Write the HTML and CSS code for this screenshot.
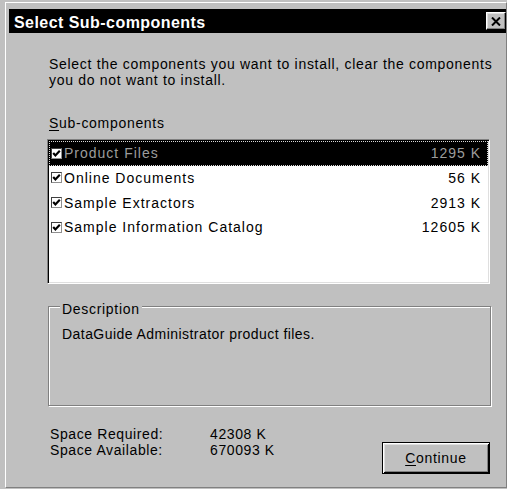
FILE: index.html
```html
<!DOCTYPE html>
<html lang="en">
<head>
<meta charset="utf-8">
<title>Select Sub-components</title>
<link rel="stylesheet" href="styles.css">
</head>
<body>
<div class="window">
  <div class="titlebar">
    <span class="title">Select Sub-components</span>
    <span class="close" aria-label="Close">
      <svg width="10" height="9" viewBox="0 0 10 9"><path d="M1 0.5 L9 8.5 M9 0.5 L1 8.5" stroke="#000" stroke-width="2" fill="none"/></svg>
    </span>
  </div>
  <div class="content">
    <p class="intro">Select the components you want to install, clear the components<br>you do not want to install.</p>
    <div class="label"><u>S</u>ub-components</div>
    <div class="listbox">
      <div class="row selected">
        <span class="check"><svg width="11" height="11" viewBox="0 0 11 11"><polyline points="2.2,5 4.4,7.4 8.8,2.8" stroke="#000" stroke-width="2.2" fill="none"/></svg></span>
        <span class="name">Product Files</span>
        <span class="size">1295 K</span>
      </div>
      <div class="row">
        <span class="check"><svg width="11" height="11" viewBox="0 0 11 11"><polyline points="2.2,5 4.4,7.4 8.8,2.8" stroke="#000" stroke-width="2.2" fill="none"/></svg></span>
        <span class="name">Online Documents</span>
        <span class="size">56 K</span>
      </div>
      <div class="row">
        <span class="check"><svg width="11" height="11" viewBox="0 0 11 11"><polyline points="2.2,5 4.4,7.4 8.8,2.8" stroke="#000" stroke-width="2.2" fill="none"/></svg></span>
        <span class="name">Sample Extractors</span>
        <span class="size">2913 K</span>
      </div>
      <div class="row">
        <span class="check"><svg width="11" height="11" viewBox="0 0 11 11"><polyline points="2.2,5 4.4,7.4 8.8,2.8" stroke="#000" stroke-width="2.2" fill="none"/></svg></span>
        <span class="name">Sample Information Catalog</span>
        <span class="size">12605 K</span>
      </div>
    </div>
    <div class="group">
      <span class="caption">Description</span>
      <p class="desc">DataGuide Administrator product files.</p>
    </div>
    <div class="footer">
      <div class="space">
        <span>Space Required:</span><span>42308 K</span>
        <span>Space Available:</span><span>670093 K</span>
      </div>
      <button class="btn" type="button"><u>C</u>ontinue</button>
    </div>
  </div>
</div>
</body>
</html>
```
FILE: styles.css
```css
body {
  margin: 0;
  background: #c0c0c0;
  font-family: "Liberation Sans", Arial, sans-serif;
  font-size: 14px;
  letter-spacing: 0.7px;
  color: #000;
}

.window {
  box-sizing: border-box;
  width: 502px;
  height: 486px;
  margin: 2px 0 0 5px;
  border: 1px solid;
  border-color: #fff #808080 #808080 #fff;
  padding: 6px 0 0 3px;
}

/* caption bar */
.titlebar {
  box-sizing: border-box;
  height: 24px;
  padding: 3px 0 0 5px;
  background: #000;
  color: #fff;
  display: flex;
  justify-content: space-between;
  align-items: flex-start;
}

.title {
  font-weight: bold;
  font-size: 16px;
  line-height: 21px;
  letter-spacing: 0.45px;
}

.close {
  box-sizing: border-box;
  width: 20px;
  height: 18px;
  background: #c0c0c0;
  border: 1px solid;
  border-color: #fff #000 #000 #fff;
  box-shadow: inset -1px -1px #808080, inset 1px 1px #dfdfdf;
  display: flex;
  align-items: center;
  justify-content: center;
}

.content {
  padding: 0 16px 0 38px;
}

.intro {
  margin: 23px 0 0 2px;
  line-height: 16px;
  white-space: nowrap;
}

.label {
  margin: 27px 0 0 2px;
  line-height: 16px;
}

u {
  text-underline-offset: 2px;
}

/* sunken list of components */
.listbox {
  box-sizing: border-box;
  height: 145px;
  margin-top: 8px;
  background: #fff;
  border: 1px solid;
  border-color: #808080 #fff #fff #808080;
  box-shadow: inset 1px 1px #000, inset -1px -1px #dfdfdf;
  padding: 1px;
  letter-spacing: 1px;
}

.row {
  height: 24.67px;
  display: flex;
  align-items: center;
  padding: 0 7px 0 2px;
  line-height: 16px;
}

.row.selected {
  background: #000;
  color: #9c9c9c;
  outline: 1px dotted #d8d8d8;
  outline-offset: -1px;
}

.check {
  box-sizing: border-box;
  width: 11px;
  height: 11px;
  background: #fff;
  border: 1px solid;
  border-color: #404040 #909090 #909090 #404040;
  margin-right: 2px;
  display: flex;
}

.check svg {
  margin: -1px;
}

.size {
  margin-left: auto;
}

/* etched description frame */
.group {
  position: relative;
  box-sizing: border-box;
  height: 100px;
  margin: 22px -1px 0 1px;
  border: 1px solid #808080;
  box-shadow: inset 1px 1px #fff, 1px 1px #fff;
}

.caption {
  position: absolute;
  top: -6px;
  left: 11px;
  padding: 0 2px;
  background: #c0c0c0;
  line-height: 16px;
}

.desc {
  margin: 0;
  padding: 19px 0 0 13px;
  line-height: 16px;
  letter-spacing: 0.45px;
}

.footer {
  margin-top: 20px;
  padding-left: 3px;
  display: flex;
  justify-content: space-between;
  align-items: flex-start;
}

.space {
  display: grid;
  grid-template-columns: 160px auto;
  line-height: 16px;
  letter-spacing: 0.6px;
}

.btn {
  box-sizing: border-box;
  width: 108px;
  height: 32px;
  margin-top: 16px;
  padding: 0;
  font: inherit;
  letter-spacing: 0.7px;
  color: #000;
  background: #c0c0c0;
  border: 1px solid #000;
  box-shadow: inset 1px 1px #fff, inset -1px -1px #000, inset 2px 2px #dfdfdf, inset -2px -2px #808080;
}
```
